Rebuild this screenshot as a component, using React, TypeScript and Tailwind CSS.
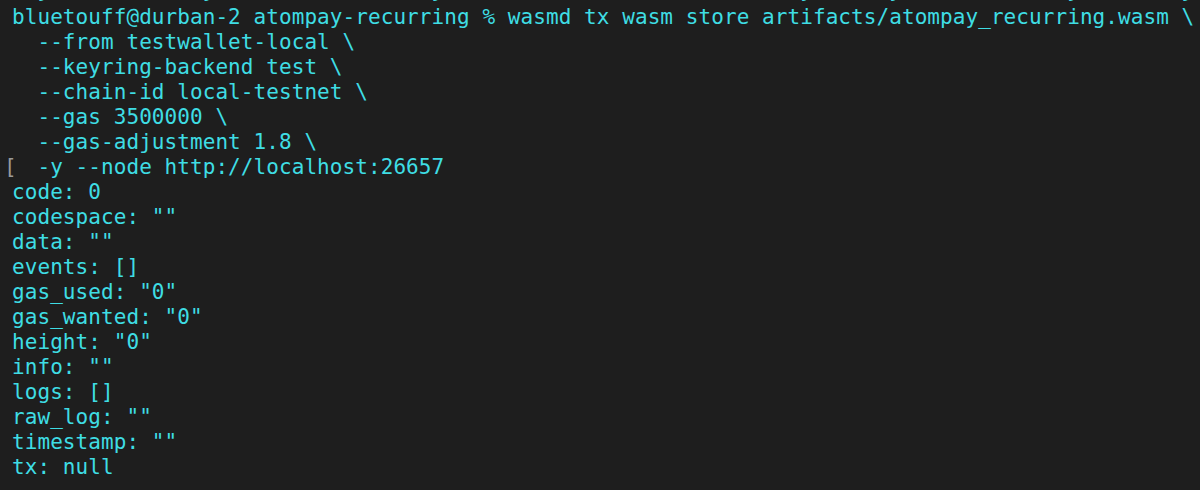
const cmd = [
  'bluetouff@durban-2 atompay-recurring % wasmd tx wasm store artifacts/atompay_recurring.wasm \\',
  '  --from testwallet-local \\',
  '  --keyring-backend test \\',
  '  --chain-id local-testnet \\',
  '  --gas 3500000 \\',
  '  --gas-adjustment 1.8 \\',
]

const output = [
  'code: 0',
  'codespace: ""',
  'data: ""',
  'events: []',
  'gas_used: "0"',
  'gas_wanted: "0"',
  'height: "0"',
  'info: ""',
  'logs: []',
  'raw_log: ""',
  'timestamp: ""',
  'tx: null',
]

// only the descenders of the line above are visible at the top edge
function prevLine() {
  const chars = Array(94).fill(' ')
  ;[2, 15, 33, 62, 69, 83, 92].forEach(i => (chars[i] = 'y'))
  return chars.join('')
}

export default function App() {
  return (
    <div
      className="w-[1200px] h-[490px] overflow-hidden bg-[#1e1e1e] text-[#3fdde4] text-[21px] leading-[25px] tracking-[0.07px] whitespace-pre pl-3"
      style={{ fontFamily: '"DejaVu Sans Mono", "Liberation Mono", monospace' }}
    >
      <div className="h-[5px] overflow-hidden" aria-hidden>
        <div className="-mt-[22px]">{prevLine()}</div>
      </div>
      {cmd.map((line, i) => (
        <div key={i}>{line}</div>
      ))}
      <div className="relative">
        <span className="absolute -left-[8px] top-0 text-[#9a9a9a] font-light">[</span>
        {'  -y --node http://localhost:26657'}
      </div>
      {output.map((line, i) => (
        <div key={i}>{line}</div>
      ))}
    </div>
  )
}
